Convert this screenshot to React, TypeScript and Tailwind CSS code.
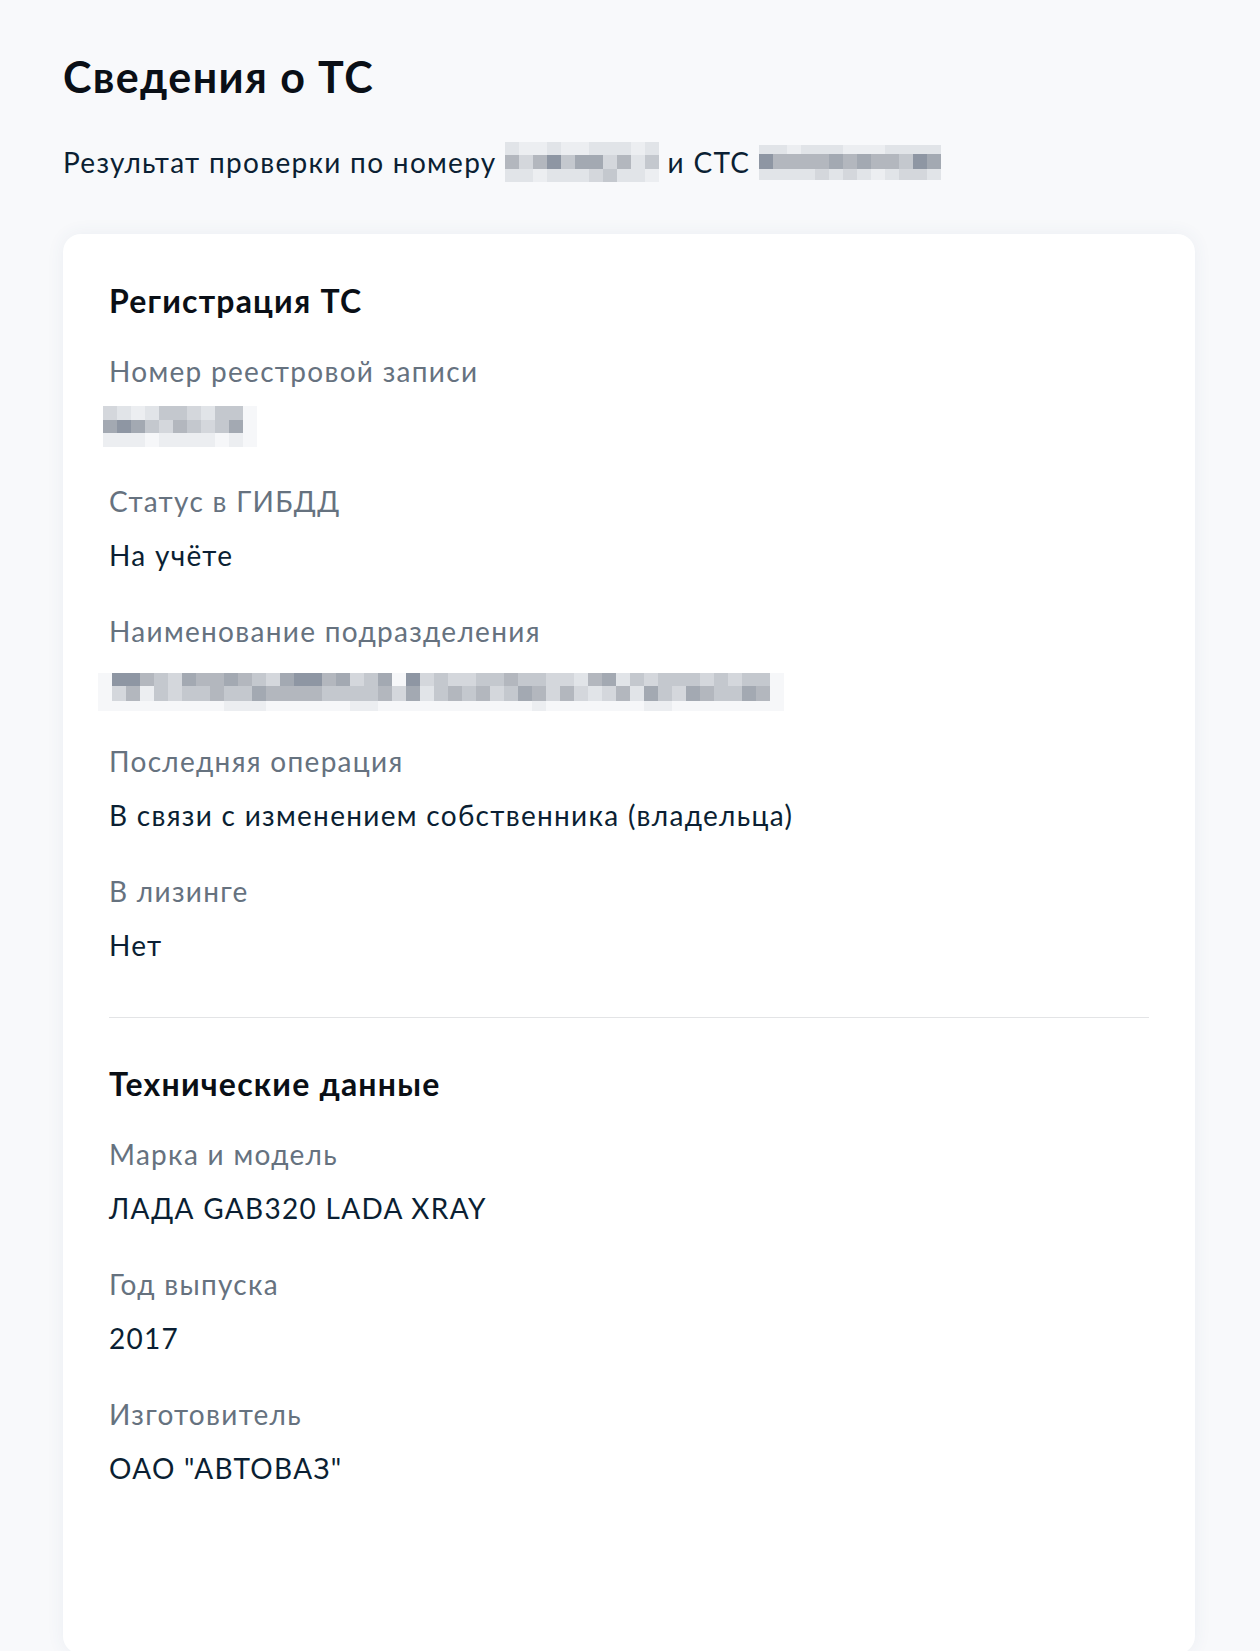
const shades = [
    "bg-[#f6f7f9]",
    "bg-[#eceef1]",
    "bg-[#e1e4e8]",
    "bg-[#d4d7dc]",
    "bg-[#c4c8ce]",
    "bg-[#b3b7be]",
    "bg-[#a3a9b2]",
    "bg-[#8e96a3]",
];

// pixelated (hidden) values, one digit = one cell shade
type MosaicProps = {
    rows: string[];
    heights: string[];
    className?: string;
};

function Mosaic({ rows, heights, className = "" }: MosaicProps) {
    return (
        <div className={"flex shrink-0 flex-col " + className}>
            {rows.map((row, r) => (
                <div key={r} className={"flex " + heights[r]}>
                    {row.split("").map((c, i) => (
                        <div key={i} className={"w-[14px] " + shades[Number(c)]} />
                    ))}
                </div>
            ))}
        </div>
    );
}

function Field({ label, children }: { label: string; children: React.ReactNode }) {
    return (
        <div className="flex flex-col">
            <div className="text-[28px] leading-[34px] tracking-[1.3px] text-[#66727f]">{label}</div>
            <div className="mt-[20px] h-[34px] text-[28px] leading-[34px] tracking-[1.3px] text-[#0b1f33]">
                {children}
            </div>
        </div>
    );
}

export default function App() {
    return (
        <div className="min-h-screen bg-[#f8f9fb] pl-[63px] pr-[65px] pt-[51px] font-['Lato','Noto_Sans',sans-serif] text-[#0b1f33]">
            <h1 className="text-[43px] font-bold leading-[52px] tracking-[1.4px] text-[#0a0f16]">
                Сведения о ТС
            </h1>

            <div className="mt-[39px] flex h-[40px] items-center text-[28px] leading-[34px] tracking-[1.3px]">
                <span>Результат проверки по номеру</span>
                <Mosaic
                    className="ml-[8px]"
                    rows={["21121122212", "53574663524", "22122234221"]}
                    heights={["h-[13px]", "h-[14px]", "h-[13px]"]}
                />
                <span className="ml-[9px]">и СТС</span>
                <Mosaic
                    className="ml-[9px]"
                    rows={["2212221112222", "7555565655476", "2222323212332"]}
                    heights={["h-[9px]", "h-[15px]", "h-[11px]"]}
                />
            </div>

            <div className="mt-[52px] min-h-[1420px] rounded-[18px] bg-white px-[46px] pt-[48px] pb-[120px] shadow-[0_0_18px_rgba(60,80,130,0.07)]">
                <h2 className="text-[32px] font-bold leading-[38px] tracking-[1.2px] text-[#0a0f16]">
                    Регистрация ТС
                </h2>

                <div className="mt-[34px] flex flex-col gap-[42px]">
                    <Field label="Номер реестровой записи">
                        <Mosaic
                            className="-mt-[2px] -ml-[6px]"
                            rows={["32124432440", "67643543460", "11101111010"]}
                            heights={["h-[14px]", "h-[13px]", "h-[14px]"]}
                        />
                    </Field>
                    <Field label="Статус в ГИБДД">На учёте</Field>
                    <Field label="Наименование подразделения">
                        <Mosaic
                            className="mt-[5px] -ml-[11px]"
                            rows={[
                                "0775436556543677563460734334454433256243444343440",
                                "0351434454465555444453624545346535323526436544650",
                                "0000000001110000001100000000000100000001100000000",
                            ]}
                            heights={["h-[13px]", "h-[15px]", "h-[10px]"]}
                        />
                    </Field>
                    <Field label="Последняя операция">
                        В связи с изменением собственника (владельца)
                    </Field>
                    <Field label="В лизинге">Нет</Field>
                </div>

                <div className="mt-[55px] h-px bg-[#e3e4e6]" />

                <h2 className="mt-[47px] text-[32px] font-bold leading-[38px] tracking-[1.2px] text-[#0a0f16]">
                    Технические данные
                </h2>

                <div className="mt-[34px] flex flex-col gap-[42px]">
                    <Field label="Марка и модель">ЛАДА GAB320 LADA XRAY</Field>
                    <Field label="Год выпуска">2017</Field>
                    <Field label="Изготовитель">ОАО "АВТОВАЗ"</Field>
                </div>
            </div>
        </div>
    );
}
